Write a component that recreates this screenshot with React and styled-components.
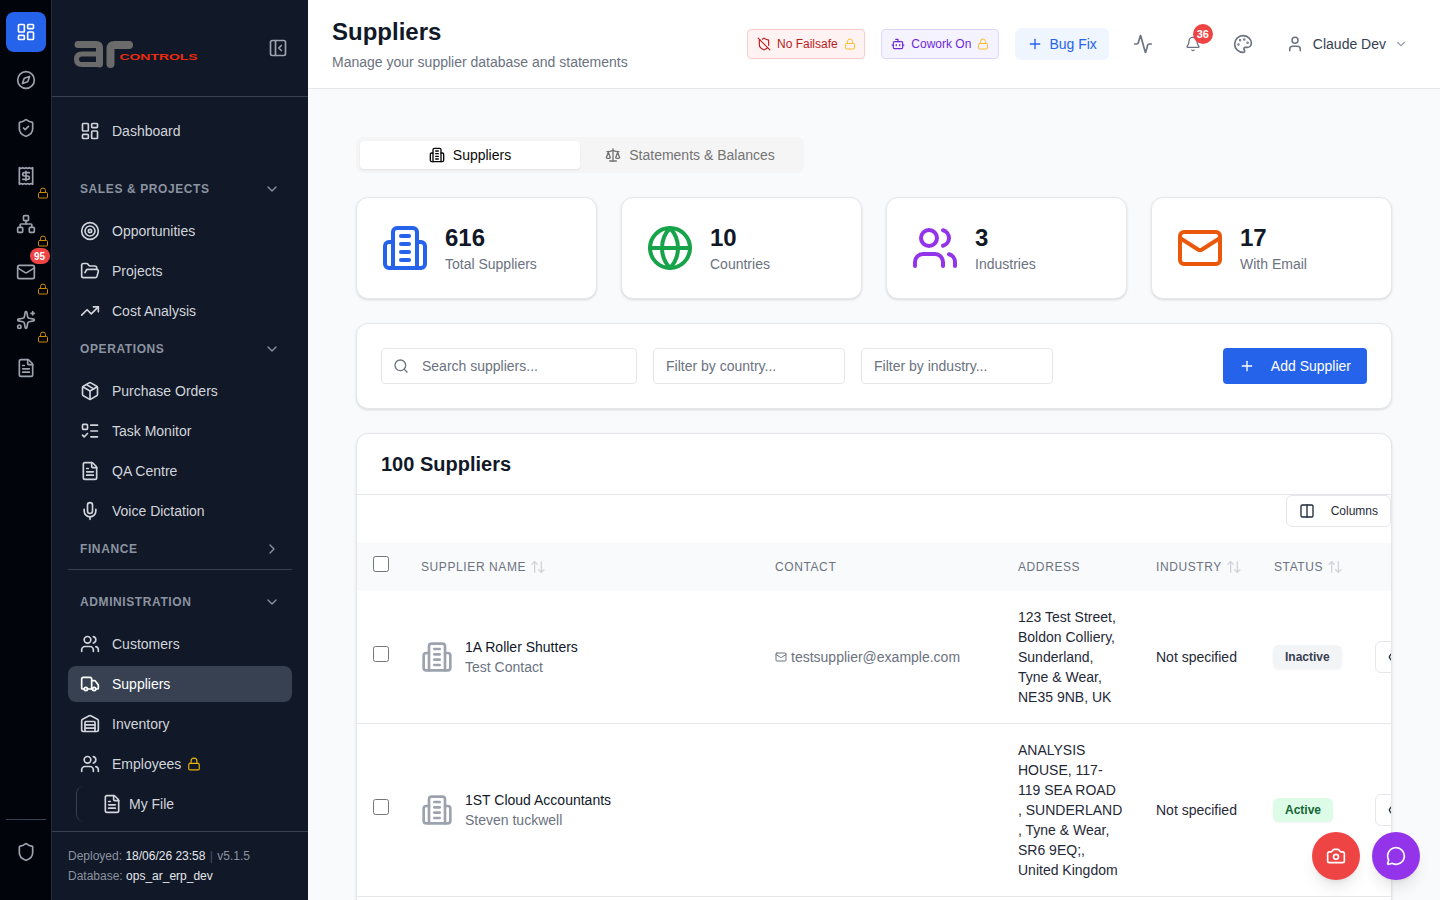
import React from "react";
import styled, { createGlobalStyle } from "styled-components";
import {
  Activity,
  ArrowUpDown,
  Bell,
  Bot,
  Camera,
  ChevronDown,
  ChevronRight,
  Columns2,
  Compass,
  Eye,
  FileText,
  FolderOpen,
  Globe,
  LayoutDashboard,
  ListTodo,
  Lock,
  Mail,
  MessageCircle,
  Mic,
  Network,
  Package,
  PanelLeftClose,
  Palette,
  Plus,
  Receipt,
  Scale,
  Search,
  Shield,
  ShieldCheck,
  ShieldOff,
  Sparkles,
  Target,
  TrendingUp,
  Truck,
  User,
  Users,
  Warehouse,
} from "lucide-react";

const GlobalStyle = createGlobalStyle`
  * { box-sizing: border-box; }
  html, body { margin: 0; height: 100%; overflow: hidden; }
  body { font-family: "Liberation Sans", Arial, sans-serif; color: #111827; background: #f9fafb; }
  input, button { font-family: inherit; }
`;

const Shell = styled.div`
  display: flex;
  height: 900px;
  overflow: hidden;
`;

/* far left icon rail */
const Rail = styled.aside`
  width: 52px;
  flex: none;
  display: flex;
  flex-direction: column;
  align-items: center;
  padding: 12px 0 28px;
  background: #02040b;
  border-right: 1px solid #1f2937;
`;

const RailList = styled.div`
  display: flex;
  flex-direction: column;
  gap: 8px;
  flex: 1;
`;

const RailButton = styled.div`
  position: relative;
  width: 40px;
  height: 40px;
  display: flex;
  align-items: center;
  justify-content: center;
  border-radius: 8px;
  color: ${(props) => (props.$active ? "#ffffff" : "#9ca3af")};
  background: ${(props) => (props.$active ? "#2563eb" : "transparent")};
`;

const RailLock = styled(Lock)`
  position: absolute;
  right: -3px;
  bottom: -3px;
  color: #ca8a04;
`;

const RailBadge = styled.span`
  position: absolute;
  top: -4px;
  right: -4px;
  min-width: 20px;
  height: 16px;
  display: flex;
  align-items: center;
  justify-content: center;
  border-radius: 8px;
  background: #ef4444;
  color: #ffffff;
  font-size: 10px;
  font-weight: 700;
`;

const RailDivider = styled.div`
  width: 40px;
  height: 1px;
  margin-bottom: 12px;
  background: #374151;
`;

/* main sidebar */
const Sidebar = styled.aside`
  width: 256px;
  flex: none;
  display: flex;
  flex-direction: column;
  background: #111827;
`;

const SideTop = styled.div`
  height: 97px;
  flex: none;
  display: flex;
  align-items: center;
  justify-content: space-between;
  padding: 0 20px 0 22px;
  border-bottom: 1px solid #374151;
  color: #9ca3af;
`;

const LogoSvg = styled.svg`
  margin-top: 12px;
  display: block;
`;

const Nav = styled.nav`
  flex: 1;
  padding: 16px 16px 0;
  display: flex;
  flex-direction: column;
`;

const NavList = styled.div`
  display: flex;
  flex-direction: column;
  gap: 4px;
  margin-top: 6px;
  margin-bottom: 2px;
`;

const NavItem = styled.div`
  height: 36px;
  display: flex;
  align-items: center;
  gap: 12px;
  padding: 0 12px;
  border-radius: 8px;
  font-size: 14px;
  color: ${(props) => (props.$active ? "#ffffff" : "#d1d5db")};
  background: ${(props) => (props.$active ? "#374151" : "transparent")};
`;

const SubGroup = styled.div`
  height: 36px;
  margin: 2px 0 0 8px;
  display: flex;
  align-items: center;
  gap: 7px;
  padding-left: 25px;
  border-left: 1px solid #374151;
  border-radius: 8px;
  font-size: 14px;
  color: #d1d5db;
`;

const SectionHead = styled.div`
  height: 36px;
  flex: none;
  margin-top: ${(props) => props.$top || 0}px;
  display: flex;
  align-items: center;
  justify-content: space-between;
  padding: 0 12px;
  font-size: 12px;
  font-weight: 700;
  letter-spacing: 0.05em;
  color: #8b93a1;
`;

const SideDivider = styled.div`
  height: 1px;
  flex: none;
  margin: 2px 0 14px;
  background: #374151;
`;

const InlineLock = styled(Lock)`
  margin-left: -6px;
  color: #eab308;
`;

const SideFooter = styled.div`
  flex: none;
  height: 69px;
  padding: 14px 16px 0;
  border-top: 1px solid #374151;
  font-size: 12px;
  line-height: 20px;
  color: #8b93a1;
`;

const Strong = styled.span`
  color: #e5e7eb;
`;

const Pipe = styled.span`
  color: #4b5563;
  margin: 0 1px;
`;

/* page */
const Page = styled.main`
  flex: 1;
  min-width: 0;
  display: flex;
  flex-direction: column;
`;

const Header = styled.header`
  height: 89px;
  flex: none;
  display: flex;
  align-items: center;
  justify-content: space-between;
  padding: 0 32px 0 24px;
  background: #ffffff;
  border-bottom: 1px solid #e5e7eb;
`;

const TitleBlock = styled.div`
  margin-top: -1px;
`;

const Title = styled.h1`
  margin: 0 0 4px;
  font-size: 24px;
  line-height: 32px;
  font-weight: 700;
  color: #111827;
`;

const Subtitle = styled.p`
  margin: 0;
  font-size: 14px;
  line-height: 20px;
  color: #6b7280;
`;

const HeaderRight = styled.div`
  display: flex;
  align-items: center;
  margin-top: -1px;
`;

const Chip = styled.div`
  height: 30px;
  width: 118px;
  margin-right: 16px;
  display: flex;
  align-items: center;
  justify-content: center;
  gap: 6px;
  border-radius: 4px;
  border: 1px solid ${(props) => props.$border};
  background: ${(props) => props.$bg};
  color: ${(props) => props.$color};
  font-size: 12px;
`;

const ChipLock = styled(Lock)`
  color: #fbbf24;
`;

const BugButton = styled.button`
  height: 32px;
  margin-right: 14px;
  display: flex;
  align-items: center;
  gap: 6px;
  padding: 0 12px;
  border: none;
  border-radius: 6px;
  background: #eff6ff;
  color: #2563eb;
  font-size: 14px;
`;

const IconButton = styled.div`
  position: relative;
  width: 40px;
  height: 40px;
  margin-right: 10px;
  display: flex;
  align-items: center;
  justify-content: center;
  color: #6b7280;
`;

const BellBadge = styled.span`
  position: absolute;
  top: 0;
  right: 0;
  width: 20px;
  height: 20px;
  display: flex;
  align-items: center;
  justify-content: center;
  border-radius: 50%;
  background: #ef4444;
  color: #ffffff;
  font-size: 11px;
  font-weight: 700;
`;

const UserMenu = styled.div`
  display: flex;
  align-items: center;
  gap: 9px;
  margin-left: 13px;
  font-size: 14px;
  color: #374151;
  svg { color: #6b7280; }
`;

const UserChevron = styled(ChevronDown)`
  margin-left: -1px;
  color: #9ca3af !important;
`;

const Content = styled.div`
  flex: 1;
  min-height: 0;
  padding: 48px 48px 0;
  display: flex;
  flex-direction: column;
  gap: 24px;
  & > * { flex: none; }
`;

const Tabs = styled.div`
  width: 448px;
  height: 36px;
  display: flex;
  padding: 4px;
  border-radius: 6px;
  background: #f5f5f5;
`;

const Tab = styled.div`
  flex: 1;
  display: flex;
  align-items: center;
  justify-content: center;
  gap: 8px;
  border-radius: 4px;
  font-size: 14px;
  color: ${(props) => (props.$active ? "#0a0a0a" : "#737373")};
  background: ${(props) => (props.$active ? "#ffffff" : "transparent")};
  box-shadow: ${(props) => (props.$active ? "0 1px 2px rgba(0, 0, 0, 0.08)" : "none")};
`;

const Stats = styled.div`
  display: grid;
  grid-template-columns: repeat(4, 1fr);
  gap: 24px;
`;

const Card = styled.section`
  background: #ffffff;
  border: 1px solid #e5e7eb;
  border-radius: 12px;
  box-shadow: 0 1px 3px rgba(0, 0, 0, 0.1), 0 1px 2px -1px rgba(0, 0, 0, 0.1);
`;

const StatCard = styled(Card)`
  display: flex;
  align-items: center;
  gap: 16px;
  padding: 24px;
`;

const StatValue = styled.div`
  font-size: 24px;
  line-height: 32px;
  font-weight: 700;
  color: #111827;
`;

const StatLabel = styled.div`
  font-size: 14px;
  line-height: 20px;
  color: #6b7280;
`;

const FilterCard = styled(Card)`
  display: flex;
  align-items: center;
  gap: 16px;
  padding: 24px;
`;

const SearchBox = styled.div`
  position: relative;
  width: 256px;
  color: #6b7280;
  svg {
    position: absolute;
    left: 12px;
    top: 10px;
  }
`;

const Input = styled.input`
  width: ${(props) => props.$width || "192px"};
  height: 36px;
  padding: 0 12px 0 ${(props) => (props.$search ? "40px" : "12px")};
  border: 1px solid #e5e7eb;
  border-radius: 4px;
  outline: none;
  background: #ffffff;
  font-size: 14px;
  color: #111827;
  &::placeholder { color: #6b7280; opacity: 1; }
`;

const AddButton = styled.button`
  height: 36px;
  margin-left: auto;
  display: flex;
  align-items: center;
  gap: 16px;
  padding: 0 16px;
  border: none;
  border-radius: 4px;
  background: #2563eb;
  color: #ffffff;
  font-size: 14px;
`;

const TableCard = styled(Card)`
  min-height: 540px;
  overflow: hidden;
`;

const TableTitle = styled.h2`
  margin: 0;
  padding: 16px 24px;
  font-size: 20px;
  line-height: 28px;
  font-weight: 700;
  color: #111827;
  border-bottom: 1px solid #e5e7eb;
`;

const ColumnsBar = styled.div`
  display: flex;
  justify-content: flex-end;
  padding-bottom: 16px;
`;

const ColumnsButton = styled.button`
  height: 32px;
  display: flex;
  align-items: center;
  gap: 16px;
  padding: 0 12px;
  border: 1px solid #e5e7eb;
  border-radius: 6px;
  background: #ffffff;
  color: #1f2937;
  font-size: 12px;
`;

const Table = styled.table`
  width: 1102px;
  table-layout: fixed;
  border-collapse: collapse;
`;

const Th = styled.th`
  height: 48px;
  padding: 0 16px;
  background: #f9fafb;
  text-align: left;
  font-size: 12px;
  font-weight: 400;
  letter-spacing: 0.05em;
  text-transform: uppercase;
  color: #6b7280;
`;

const SortWrap = styled.span`
  display: inline-flex;
  align-items: center;
  gap: 4px;
  svg { color: #d1d5db; }
`;

const Tr = styled.tr`
  border-bottom: 1px solid #e5e7eb;
`;

const Td = styled.td`
  padding: 16px;
  font-size: 14px;
  line-height: 20px;
  color: #1f2937;
  vertical-align: middle;
`;

const AddressTd = styled(Td)`
  padding-right: 16.6px;
`;

const Check = styled.input`
  display: block;
  width: 16px;
  height: 16px;
  margin: -6px 0 0;
`;

const NameCell = styled.div`
  display: flex;
  align-items: center;
  gap: 12px;
  svg { color: #9ca3af; }
`;

const SupplierName = styled.div`
  color: #111827;
`;

const ContactName = styled.div`
  color: #6b7280;
`;

const EmailRow = styled.div`
  display: flex;
  align-items: center;
  gap: 4px;
  color: #6b7280;
`;

const StatusPill = styled.span`
  display: inline-block;
  vertical-align: middle;
  padding: 4px 12px;
  border-radius: 6px;
  font-size: 12px;
  line-height: 16px;
  font-weight: 700;
  background: ${(props) => (props.$active ? "#dcfce7" : "#f3f4f6")};
  color: ${(props) => (props.$active ? "#166534" : "#374151")};
  box-shadow: 0 1px 2px rgba(0, 0, 0, 0.05);
  margin-left: -1px;
`;

const RowAction = styled.div`
  width: 40px;
  height: 32px;
  display: flex;
  align-items: center;
  padding-left: 12px;
  border: 1px solid #e5e7eb;
  border-radius: 6px;
  background: #ffffff;
  color: #1f2937;
`;

const Fabs = styled.div`
  position: fixed;
  right: 20px;
  bottom: 20px;
  display: flex;
  gap: 12px;
`;

const Fab = styled.div`
  width: 48px;
  height: 48px;
  display: flex;
  align-items: center;
  justify-content: center;
  border-radius: 50%;
  color: #ffffff;
  background: ${(props) => props.$bg};
  box-shadow: 0 10px 15px -3px rgba(0, 0, 0, 0.1), 0 4px 6px -4px rgba(0, 0, 0, 0.1);
`;

// tower with two equal wings, the package's Building2 has a door and uneven wings
const BuildingIcon = ({ size = 24, color = "currentColor" }) => (
  <svg
    width={size}
    height={size}
    viewBox="0 0 24 24"
    fill="none"
    stroke={color}
    strokeWidth="2"
    strokeLinecap="round"
    strokeLinejoin="round"
  >
    <path d="M6 22V4a2 2 0 0 1 2-2h8a2 2 0 0 1 2 2v18Z" />
    <path d="M6 9H4a2 2 0 0 0-2 2v9a2 2 0 0 0 2 2h2" />
    <path d="M18 9h2a2 2 0 0 1 2 2v9a2 2 0 0 1-2 2h-2" />
    <path d="M10 6h4" />
    <path d="M10 10h4" />
    <path d="M10 14h4" />
    <path d="M10 18h4" />
  </svg>
);

const railItems = [
  { icon: LayoutDashboard, active: true },
  { icon: Compass },
  { icon: ShieldCheck },
  { icon: Receipt, locked: true },
  { icon: Network, locked: true },
  { icon: Mail, locked: true, badge: "95" },
  { icon: Sparkles, locked: true },
  { icon: FileText },
];

const sales = [
  { icon: Target, label: "Opportunities" },
  { icon: FolderOpen, label: "Projects" },
  { icon: TrendingUp, label: "Cost Analysis" },
];

const operations = [
  { icon: Package, label: "Purchase Orders" },
  { icon: ListTodo, label: "Task Monitor" },
  { icon: FileText, label: "QA Centre" },
  { icon: Mic, label: "Voice Dictation" },
];

const admin = [
  { icon: Users, label: "Customers" },
  { icon: Truck, label: "Suppliers", active: true },
  { icon: Warehouse, label: "Inventory" },
  { icon: Users, label: "Employees", locked: true },
];

const stats = [
  { icon: BuildingIcon, color: "#2563eb", value: "616", label: "Total Suppliers" },
  { icon: Globe, color: "#16a34a", value: "10", label: "Countries" },
  { icon: Users, color: "#9333ea", value: "3", label: "Industries" },
  { icon: Mail, color: "#ea580c", value: "17", label: "With Email" },
];

const suppliers = [
  {
    name: "1A Roller Shutters",
    contact: "Test Contact",
    email: "testsupplier@example.com",
    address: "123 Test Street, Boldon Colliery, Sunderland, Tyne & Wear, NE35 9NB, UK",
    active: false,
  },
  {
    name: "1ST Cloud Accountants",
    contact: "Steven tuckwell",
    address: "ANALYSIS HOUSE, 117-119 SEA ROAD , SUNDERLAND , Tyne & Wear, SR6 9EQ;, United Kingdom",
    active: true,
  },
];

const columnWidths = [48, 354, 243, 138, 118, 101, 100];

const Logo = () => (
  <LogoSvg width="126" height="28" viewBox="0 0 126 28" fill="none" aria-label="AR Controls">
    <g stroke="#6b6b6b" strokeLinecap="round" strokeLinejoin="round">
      <path d="M4 4.5H22Q25.5 4.5 25.5 8V24" strokeWidth="7" />
      <path d="M24 14H8Q2.5 14 2.5 19.2Q2.5 24.5 8 24.5H24" strokeWidth="5" />
      <path d="M36.5 24V9Q36.5 5 40.5 5H55" strokeWidth="8" />
    </g>
    <text
      x="45.5"
      y="20"
      fontFamily="Liberation Sans, Arial, sans-serif"
      fontSize="8.4"
      fontWeight="700"
      fill="#f02a0a"
      textLength="78"
      lengthAdjust="spacingAndGlyphs"
    >
      CONTROLS
    </text>
  </LogoSvg>
);

const SortLabel = ({ children }) => (
  <SortWrap>
    {children}
    <ArrowUpDown size={16} />
  </SortWrap>
);

const NavLinks = ({ items }) => (
  <NavList>
    {items.map((item) => (
      <NavItem key={item.label} $active={item.active}>
        <item.icon size={20} />
        {item.label}
        {item.locked && <InlineLock size={14} />}
      </NavItem>
    ))}
  </NavList>
);

const App = () => {
  return (
    <Shell>
      <GlobalStyle />
      <Rail>
        <RailList>
          {railItems.map((item, i) => (
            <RailButton key={i} $active={item.active}>
              <item.icon size={20} />
              {item.badge && <RailBadge>{item.badge}</RailBadge>}
              {item.locked && <RailLock size={12} />}
            </RailButton>
          ))}
        </RailList>
        <RailDivider />
        <RailButton>
          <Shield size={20} />
        </RailButton>
      </Rail>

      <Sidebar>
        <SideTop>
          <Logo />
          <PanelLeftClose size={20} />
        </SideTop>
        <Nav>
          <NavItem>
            <LayoutDashboard size={20} />
            Dashboard
          </NavItem>
          <SectionHead $top={22}>
            SALES &amp; PROJECTS
            <ChevronDown size={16} />
          </SectionHead>
          <NavLinks items={sales} />
          <SectionHead>
            OPERATIONS
            <ChevronDown size={16} />
          </SectionHead>
          <NavLinks items={operations} />
          <SectionHead>
            FINANCE
            <ChevronRight size={16} />
          </SectionHead>
          <SideDivider />
          <SectionHead>
            ADMINISTRATION
            <ChevronDown size={16} />
          </SectionHead>
          <NavLinks items={admin} />
          <SubGroup>
            <FileText size={20} />
            My File
          </SubGroup>
        </Nav>
        <SideFooter>
          <div>
            Deployed: <Strong>18/06/26 23:58</Strong> <Pipe>|</Pipe> v5.1.5
          </div>
          <div>
            Database: <Strong>ops_ar_erp_dev</Strong>
          </div>
        </SideFooter>
      </Sidebar>

      <Page>
        <Header>
          <TitleBlock>
            <Title>Suppliers</Title>
            <Subtitle>Manage your supplier database and statements</Subtitle>
          </TitleBlock>
          <HeaderRight>
            <Chip $bg="#fef2f2" $border="#fecaca" $color="#b91c1c">
              <ShieldOff size={14} />
              No Failsafe
              <ChipLock size={12} />
            </Chip>
            <Chip $bg="#f5f3ff" $border="#ddd6fe" $color="#6d28d9">
              <Bot size={14} />
              Cowork On
              <ChipLock size={12} />
            </Chip>
            <BugButton>
              <Plus size={16} />
              Bug Fix
            </BugButton>
            <IconButton>
              <Activity size={20} />
            </IconButton>
            <IconButton>
              <Bell size={16} />
              <BellBadge>36</BellBadge>
            </IconButton>
            <IconButton>
              <Palette size={20} />
            </IconButton>
            <UserMenu>
              <User size={18} />
              Claude Dev
              <UserChevron size={14} />
            </UserMenu>
          </HeaderRight>
        </Header>

        <Content>
          <Tabs>
            <Tab $active>
              <BuildingIcon size={16} />
              Suppliers
            </Tab>
            <Tab>
              <Scale size={16} />
              Statements &amp; Balances
            </Tab>
          </Tabs>

          <Stats>
            {stats.map((stat) => (
              <StatCard key={stat.label}>
                <stat.icon size={48} color={stat.color} />
                <div>
                  <StatValue>{stat.value}</StatValue>
                  <StatLabel>{stat.label}</StatLabel>
                </div>
              </StatCard>
            ))}
          </Stats>

          <FilterCard>
            <SearchBox>
              <Search size={16} />
              <Input $search $width="256px" placeholder="Search suppliers..." />
            </SearchBox>
            <Input placeholder="Filter by country..." />
            <Input placeholder="Filter by industry..." />
            <AddButton>
              <Plus size={16} />
              Add Supplier
            </AddButton>
          </FilterCard>

          <TableCard>
            <TableTitle>100 Suppliers</TableTitle>
            <ColumnsBar>
              <ColumnsButton>
                <Columns2 size={16} />
                Columns
              </ColumnsButton>
            </ColumnsBar>
            <Table>
              <colgroup>
                {columnWidths.map((w, i) => (
                  <col key={i} width={w} />
                ))}
              </colgroup>
              <thead>
                <tr>
                  <Th>
                    <Check type="checkbox" />
                  </Th>
                  <Th>
                    <SortLabel>Supplier Name</SortLabel>
                  </Th>
                  <Th>Contact</Th>
                  <Th>Address</Th>
                  <Th>
                    <SortLabel>Industry</SortLabel>
                  </Th>
                  <Th>
                    <SortLabel>Status</SortLabel>
                  </Th>
                  <Th />
                </tr>
              </thead>
              <tbody>
                {suppliers.map((s) => (
                  <Tr key={s.name}>
                    <Td>
                      <Check type="checkbox" />
                    </Td>
                    <Td>
                      <NameCell>
                        <BuildingIcon size={32} />
                        <div>
                          <SupplierName>{s.name}</SupplierName>
                          <ContactName>{s.contact}</ContactName>
                        </div>
                      </NameCell>
                    </Td>
                    <Td>
                      {s.email && (
                        <EmailRow>
                          <Mail size={12} />
                          {s.email}
                        </EmailRow>
                      )}
                    </Td>
                    <AddressTd>{s.address}</AddressTd>
                    <Td>Not specified</Td>
                    <Td>
                      <StatusPill $active={s.active}>{s.active ? "Active" : "Inactive"}</StatusPill>
                    </Td>
                    <Td>
                      <RowAction>
                        <Eye size={16} />
                      </RowAction>
                    </Td>
                  </Tr>
                ))}
              </tbody>
            </Table>
          </TableCard>
        </Content>
      </Page>

      <Fabs>
        <Fab $bg="#ef4444">
          <Camera size={20} />
        </Fab>
        <Fab $bg="#9333ea">
          <MessageCircle size={20} />
        </Fab>
      </Fabs>
    </Shell>
  );
};

export default App;
